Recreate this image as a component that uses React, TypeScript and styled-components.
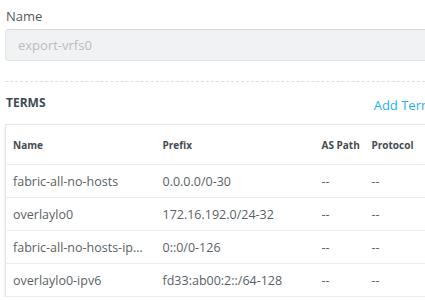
import React from 'react'
import styled, { createGlobalStyle } from 'styled-components'

const Global = createGlobalStyle`
	body {
		margin: 0;
		background: #ffffff;
		font-family: "Open Sans", "Liberation Sans", sans-serif;
		overflow: hidden;
	}
`

const Page = styled.div`
	width: 450px;
	padding: 6px 0 0 5px;
	box-sizing: border-box;
`

const Label = styled.div`
	font-size: 13px;
	color: #555a60;
	line-height: 20px;
	padding-left: 1px;
	margin-bottom: 3px;
`

const Input = styled.input`
	display: block;
	width: 100%;
	height: 32px;
	box-sizing: border-box;
	border: 1px solid #e2e3e5;
	border-top-color: #d8d9db;
	border-radius: 4px;
	background: #f1f2f4;
	padding: 0 12px;
	font-family: inherit;
	font-size: 13px;
	color: #999;
	&::placeholder {
		color: #b9bcc0;
	}
`

const Divider = styled.div`
	border-top: 1px dashed #dcdde0;
	margin-top: 20px;
`

const SectionHead = styled.div`
	display: flex;
	justify-content: space-between;
	align-items: flex-end;
	height: 30px;
	padding: 0 17px 0 1px;
	margin-bottom: 12px;
`

const Title = styled.span`
	font-size: 12px;
	font-weight: 700;
	color: #3f4a56;
	line-height: 16px;
	margin-bottom: 1px;
`

const AddLink = styled.a`
	font-size: 13px;
	color: #1fb0f2;
	line-height: 18px;
	margin-bottom: -2px;
	white-space: nowrap;
	cursor: pointer;
`

const Table = styled.table`
	width: 440px;
	border-collapse: collapse;
	border: 1px solid #e4e5e7;
	box-shadow: 0 1px 2px rgba(0, 0, 0, 0.12);
	table-layout: fixed;
`

const Th = styled.th<{ w: number }>`
	box-sizing: border-box;
	width: ${p => p.w}px;
	height: 40px;
	text-align: left;
	font-size: 10px;
	font-weight: 700;
	color: #454b52;
	padding: 0 0 0 7px;
	white-space: nowrap;
	border-bottom: 1px solid #ececee;
`

const Td = styled.td`
	height: 32px;
	font-size: 12.5px;
	color: #5a5f66;
	padding: 0 0 0 7px;
	white-space: nowrap;
	overflow: hidden;
	border-bottom: 1px solid #ececee;
`

const rows = [
	['fabric-all-no-hosts', '0.0.0.0/0-30'],
	['overlaylo0', '172.16.192.0/24-32'],
	['fabric-all-no-hosts-ip…', '0::0/0-126'],
	['overlaylo0-ipv6', 'fd33:ab00:2::/64-128'],
]

const App = () => {
	return (
		<Page>
			<Global />
			<Label>Name</Label>
			<Input placeholder="export-vrfs0" readOnly />
			<Divider />
			<SectionHead>
				<Title>TERMS</Title>
				<AddLink>Add Term</AddLink>
			</SectionHead>
			<Table>
				<thead>
					<tr>
						<Th w={150}>Name</Th>
						<Th w={159}>Prefix</Th>
						<Th w={50}>AS Path</Th>
						<Th w={81}>Protocol</Th>
					</tr>
				</thead>
				<tbody>
					{rows.map(r => (
						<tr key={r[0]}>
							<Td>{r[0]}</Td>
							<Td>{r[1]}</Td>
							<Td>--</Td>
							<Td>--</Td>
						</tr>
					))}
				</tbody>
			</Table>
		</Page>
	)
}

export default App
